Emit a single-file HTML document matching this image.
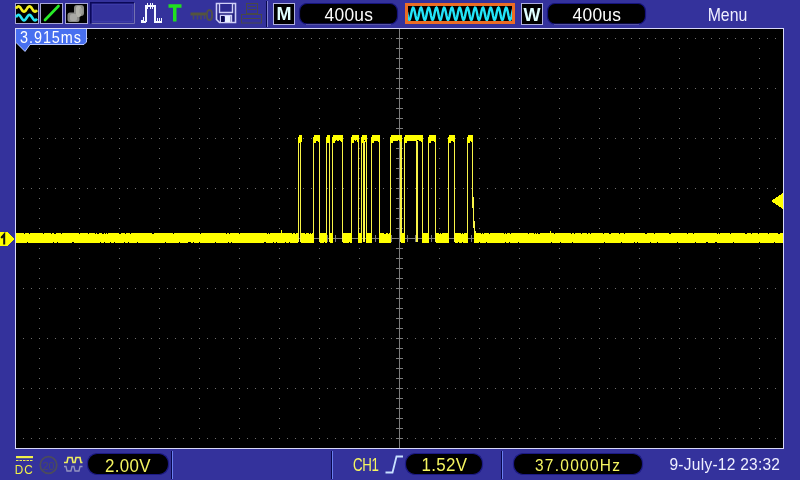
<!DOCTYPE html>
<html><head><meta charset="utf-8"><title>Oscilloscope</title>
<style>
html,body{margin:0;padding:0;width:800px;height:480px;overflow:hidden;background:#34329c;}
svg{position:absolute;left:0;top:0;display:block;will-change:transform;}
text{font-family:"Liberation Sans",sans-serif;}
</style></head><body>
<svg width="800" height="480" viewBox="0 0 800 480">
<rect x="0" y="0" width="800" height="480" fill="#34329c"/>
<g shape-rendering="crispEdges">
<rect x="15" y="28" width="769" height="421" fill="#d8d8f8" />
<rect x="16" y="29" width="767" height="419" fill="#000" />
<path d="M23 38h1v1h-1zM31 38h1v1h-1zM39 38h1v1h-1zM47 38h1v1h-1zM55 38h1v1h-1zM63 38h1v1h-1zM71 38h1v1h-1zM79 38h1v1h-1zM87 38h1v1h-1zM95 38h1v1h-1zM103 38h1v1h-1zM111 38h1v1h-1zM119 38h1v1h-1zM127 38h1v1h-1zM135 38h1v1h-1zM143 38h1v1h-1zM151 38h1v1h-1zM159 38h1v1h-1zM167 38h1v1h-1zM175 38h1v1h-1zM183 38h1v1h-1zM191 38h1v1h-1zM199 38h1v1h-1zM207 38h1v1h-1zM215 38h1v1h-1zM223 38h1v1h-1zM231 38h1v1h-1zM239 38h1v1h-1zM247 38h1v1h-1zM255 38h1v1h-1zM263 38h1v1h-1zM271 38h1v1h-1zM279 38h1v1h-1zM287 38h1v1h-1zM295 38h1v1h-1zM303 38h1v1h-1zM311 38h1v1h-1zM319 38h1v1h-1zM327 38h1v1h-1zM335 38h1v1h-1zM343 38h1v1h-1zM351 38h1v1h-1zM359 38h1v1h-1zM367 38h1v1h-1zM375 38h1v1h-1zM383 38h1v1h-1zM391 38h1v1h-1zM399 38h1v1h-1zM407 38h1v1h-1zM415 38h1v1h-1zM423 38h1v1h-1zM431 38h1v1h-1zM439 38h1v1h-1zM447 38h1v1h-1zM455 38h1v1h-1zM463 38h1v1h-1zM471 38h1v1h-1zM479 38h1v1h-1zM487 38h1v1h-1zM495 38h1v1h-1zM503 38h1v1h-1zM511 38h1v1h-1zM519 38h1v1h-1zM527 38h1v1h-1zM535 38h1v1h-1zM543 38h1v1h-1zM551 38h1v1h-1zM559 38h1v1h-1zM567 38h1v1h-1zM575 38h1v1h-1zM583 38h1v1h-1zM591 38h1v1h-1zM599 38h1v1h-1zM607 38h1v1h-1zM615 38h1v1h-1zM623 38h1v1h-1zM631 38h1v1h-1zM639 38h1v1h-1zM647 38h1v1h-1zM655 38h1v1h-1zM663 38h1v1h-1zM671 38h1v1h-1zM679 38h1v1h-1zM687 38h1v1h-1zM695 38h1v1h-1zM703 38h1v1h-1zM711 38h1v1h-1zM719 38h1v1h-1zM727 38h1v1h-1zM735 38h1v1h-1zM743 38h1v1h-1zM751 38h1v1h-1zM759 38h1v1h-1zM767 38h1v1h-1zM775 38h1v1h-1zM23 88h1v1h-1zM31 88h1v1h-1zM39 88h1v1h-1zM47 88h1v1h-1zM55 88h1v1h-1zM63 88h1v1h-1zM71 88h1v1h-1zM79 88h1v1h-1zM87 88h1v1h-1zM95 88h1v1h-1zM103 88h1v1h-1zM111 88h1v1h-1zM119 88h1v1h-1zM127 88h1v1h-1zM135 88h1v1h-1zM143 88h1v1h-1zM151 88h1v1h-1zM159 88h1v1h-1zM167 88h1v1h-1zM175 88h1v1h-1zM183 88h1v1h-1zM191 88h1v1h-1zM199 88h1v1h-1zM207 88h1v1h-1zM215 88h1v1h-1zM223 88h1v1h-1zM231 88h1v1h-1zM239 88h1v1h-1zM247 88h1v1h-1zM255 88h1v1h-1zM263 88h1v1h-1zM271 88h1v1h-1zM279 88h1v1h-1zM287 88h1v1h-1zM295 88h1v1h-1zM303 88h1v1h-1zM311 88h1v1h-1zM319 88h1v1h-1zM327 88h1v1h-1zM335 88h1v1h-1zM343 88h1v1h-1zM351 88h1v1h-1zM359 88h1v1h-1zM367 88h1v1h-1zM375 88h1v1h-1zM383 88h1v1h-1zM391 88h1v1h-1zM399 88h1v1h-1zM407 88h1v1h-1zM415 88h1v1h-1zM423 88h1v1h-1zM431 88h1v1h-1zM439 88h1v1h-1zM447 88h1v1h-1zM455 88h1v1h-1zM463 88h1v1h-1zM471 88h1v1h-1zM479 88h1v1h-1zM487 88h1v1h-1zM495 88h1v1h-1zM503 88h1v1h-1zM511 88h1v1h-1zM519 88h1v1h-1zM527 88h1v1h-1zM535 88h1v1h-1zM543 88h1v1h-1zM551 88h1v1h-1zM559 88h1v1h-1zM567 88h1v1h-1zM575 88h1v1h-1zM583 88h1v1h-1zM591 88h1v1h-1zM599 88h1v1h-1zM607 88h1v1h-1zM615 88h1v1h-1zM623 88h1v1h-1zM631 88h1v1h-1zM639 88h1v1h-1zM647 88h1v1h-1zM655 88h1v1h-1zM663 88h1v1h-1zM671 88h1v1h-1zM679 88h1v1h-1zM687 88h1v1h-1zM695 88h1v1h-1zM703 88h1v1h-1zM711 88h1v1h-1zM719 88h1v1h-1zM727 88h1v1h-1zM735 88h1v1h-1zM743 88h1v1h-1zM751 88h1v1h-1zM759 88h1v1h-1zM767 88h1v1h-1zM775 88h1v1h-1zM23 138h1v1h-1zM31 138h1v1h-1zM39 138h1v1h-1zM47 138h1v1h-1zM55 138h1v1h-1zM63 138h1v1h-1zM71 138h1v1h-1zM79 138h1v1h-1zM87 138h1v1h-1zM95 138h1v1h-1zM103 138h1v1h-1zM111 138h1v1h-1zM119 138h1v1h-1zM127 138h1v1h-1zM135 138h1v1h-1zM143 138h1v1h-1zM151 138h1v1h-1zM159 138h1v1h-1zM167 138h1v1h-1zM175 138h1v1h-1zM183 138h1v1h-1zM191 138h1v1h-1zM199 138h1v1h-1zM207 138h1v1h-1zM215 138h1v1h-1zM223 138h1v1h-1zM231 138h1v1h-1zM239 138h1v1h-1zM247 138h1v1h-1zM255 138h1v1h-1zM263 138h1v1h-1zM271 138h1v1h-1zM279 138h1v1h-1zM287 138h1v1h-1zM295 138h1v1h-1zM303 138h1v1h-1zM311 138h1v1h-1zM319 138h1v1h-1zM327 138h1v1h-1zM335 138h1v1h-1zM343 138h1v1h-1zM351 138h1v1h-1zM359 138h1v1h-1zM367 138h1v1h-1zM375 138h1v1h-1zM383 138h1v1h-1zM391 138h1v1h-1zM399 138h1v1h-1zM407 138h1v1h-1zM415 138h1v1h-1zM423 138h1v1h-1zM431 138h1v1h-1zM439 138h1v1h-1zM447 138h1v1h-1zM455 138h1v1h-1zM463 138h1v1h-1zM471 138h1v1h-1zM479 138h1v1h-1zM487 138h1v1h-1zM495 138h1v1h-1zM503 138h1v1h-1zM511 138h1v1h-1zM519 138h1v1h-1zM527 138h1v1h-1zM535 138h1v1h-1zM543 138h1v1h-1zM551 138h1v1h-1zM559 138h1v1h-1zM567 138h1v1h-1zM575 138h1v1h-1zM583 138h1v1h-1zM591 138h1v1h-1zM599 138h1v1h-1zM607 138h1v1h-1zM615 138h1v1h-1zM623 138h1v1h-1zM631 138h1v1h-1zM639 138h1v1h-1zM647 138h1v1h-1zM655 138h1v1h-1zM663 138h1v1h-1zM671 138h1v1h-1zM679 138h1v1h-1zM687 138h1v1h-1zM695 138h1v1h-1zM703 138h1v1h-1zM711 138h1v1h-1zM719 138h1v1h-1zM727 138h1v1h-1zM735 138h1v1h-1zM743 138h1v1h-1zM751 138h1v1h-1zM759 138h1v1h-1zM767 138h1v1h-1zM775 138h1v1h-1zM23 188h1v1h-1zM31 188h1v1h-1zM39 188h1v1h-1zM47 188h1v1h-1zM55 188h1v1h-1zM63 188h1v1h-1zM71 188h1v1h-1zM79 188h1v1h-1zM87 188h1v1h-1zM95 188h1v1h-1zM103 188h1v1h-1zM111 188h1v1h-1zM119 188h1v1h-1zM127 188h1v1h-1zM135 188h1v1h-1zM143 188h1v1h-1zM151 188h1v1h-1zM159 188h1v1h-1zM167 188h1v1h-1zM175 188h1v1h-1zM183 188h1v1h-1zM191 188h1v1h-1zM199 188h1v1h-1zM207 188h1v1h-1zM215 188h1v1h-1zM223 188h1v1h-1zM231 188h1v1h-1zM239 188h1v1h-1zM247 188h1v1h-1zM255 188h1v1h-1zM263 188h1v1h-1zM271 188h1v1h-1zM279 188h1v1h-1zM287 188h1v1h-1zM295 188h1v1h-1zM303 188h1v1h-1zM311 188h1v1h-1zM319 188h1v1h-1zM327 188h1v1h-1zM335 188h1v1h-1zM343 188h1v1h-1zM351 188h1v1h-1zM359 188h1v1h-1zM367 188h1v1h-1zM375 188h1v1h-1zM383 188h1v1h-1zM391 188h1v1h-1zM399 188h1v1h-1zM407 188h1v1h-1zM415 188h1v1h-1zM423 188h1v1h-1zM431 188h1v1h-1zM439 188h1v1h-1zM447 188h1v1h-1zM455 188h1v1h-1zM463 188h1v1h-1zM471 188h1v1h-1zM479 188h1v1h-1zM487 188h1v1h-1zM495 188h1v1h-1zM503 188h1v1h-1zM511 188h1v1h-1zM519 188h1v1h-1zM527 188h1v1h-1zM535 188h1v1h-1zM543 188h1v1h-1zM551 188h1v1h-1zM559 188h1v1h-1zM567 188h1v1h-1zM575 188h1v1h-1zM583 188h1v1h-1zM591 188h1v1h-1zM599 188h1v1h-1zM607 188h1v1h-1zM615 188h1v1h-1zM623 188h1v1h-1zM631 188h1v1h-1zM639 188h1v1h-1zM647 188h1v1h-1zM655 188h1v1h-1zM663 188h1v1h-1zM671 188h1v1h-1zM679 188h1v1h-1zM687 188h1v1h-1zM695 188h1v1h-1zM703 188h1v1h-1zM711 188h1v1h-1zM719 188h1v1h-1zM727 188h1v1h-1zM735 188h1v1h-1zM743 188h1v1h-1zM751 188h1v1h-1zM759 188h1v1h-1zM767 188h1v1h-1zM775 188h1v1h-1zM23 288h1v1h-1zM31 288h1v1h-1zM39 288h1v1h-1zM47 288h1v1h-1zM55 288h1v1h-1zM63 288h1v1h-1zM71 288h1v1h-1zM79 288h1v1h-1zM87 288h1v1h-1zM95 288h1v1h-1zM103 288h1v1h-1zM111 288h1v1h-1zM119 288h1v1h-1zM127 288h1v1h-1zM135 288h1v1h-1zM143 288h1v1h-1zM151 288h1v1h-1zM159 288h1v1h-1zM167 288h1v1h-1zM175 288h1v1h-1zM183 288h1v1h-1zM191 288h1v1h-1zM199 288h1v1h-1zM207 288h1v1h-1zM215 288h1v1h-1zM223 288h1v1h-1zM231 288h1v1h-1zM239 288h1v1h-1zM247 288h1v1h-1zM255 288h1v1h-1zM263 288h1v1h-1zM271 288h1v1h-1zM279 288h1v1h-1zM287 288h1v1h-1zM295 288h1v1h-1zM303 288h1v1h-1zM311 288h1v1h-1zM319 288h1v1h-1zM327 288h1v1h-1zM335 288h1v1h-1zM343 288h1v1h-1zM351 288h1v1h-1zM359 288h1v1h-1zM367 288h1v1h-1zM375 288h1v1h-1zM383 288h1v1h-1zM391 288h1v1h-1zM399 288h1v1h-1zM407 288h1v1h-1zM415 288h1v1h-1zM423 288h1v1h-1zM431 288h1v1h-1zM439 288h1v1h-1zM447 288h1v1h-1zM455 288h1v1h-1zM463 288h1v1h-1zM471 288h1v1h-1zM479 288h1v1h-1zM487 288h1v1h-1zM495 288h1v1h-1zM503 288h1v1h-1zM511 288h1v1h-1zM519 288h1v1h-1zM527 288h1v1h-1zM535 288h1v1h-1zM543 288h1v1h-1zM551 288h1v1h-1zM559 288h1v1h-1zM567 288h1v1h-1zM575 288h1v1h-1zM583 288h1v1h-1zM591 288h1v1h-1zM599 288h1v1h-1zM607 288h1v1h-1zM615 288h1v1h-1zM623 288h1v1h-1zM631 288h1v1h-1zM639 288h1v1h-1zM647 288h1v1h-1zM655 288h1v1h-1zM663 288h1v1h-1zM671 288h1v1h-1zM679 288h1v1h-1zM687 288h1v1h-1zM695 288h1v1h-1zM703 288h1v1h-1zM711 288h1v1h-1zM719 288h1v1h-1zM727 288h1v1h-1zM735 288h1v1h-1zM743 288h1v1h-1zM751 288h1v1h-1zM759 288h1v1h-1zM767 288h1v1h-1zM775 288h1v1h-1zM23 338h1v1h-1zM31 338h1v1h-1zM39 338h1v1h-1zM47 338h1v1h-1zM55 338h1v1h-1zM63 338h1v1h-1zM71 338h1v1h-1zM79 338h1v1h-1zM87 338h1v1h-1zM95 338h1v1h-1zM103 338h1v1h-1zM111 338h1v1h-1zM119 338h1v1h-1zM127 338h1v1h-1zM135 338h1v1h-1zM143 338h1v1h-1zM151 338h1v1h-1zM159 338h1v1h-1zM167 338h1v1h-1zM175 338h1v1h-1zM183 338h1v1h-1zM191 338h1v1h-1zM199 338h1v1h-1zM207 338h1v1h-1zM215 338h1v1h-1zM223 338h1v1h-1zM231 338h1v1h-1zM239 338h1v1h-1zM247 338h1v1h-1zM255 338h1v1h-1zM263 338h1v1h-1zM271 338h1v1h-1zM279 338h1v1h-1zM287 338h1v1h-1zM295 338h1v1h-1zM303 338h1v1h-1zM311 338h1v1h-1zM319 338h1v1h-1zM327 338h1v1h-1zM335 338h1v1h-1zM343 338h1v1h-1zM351 338h1v1h-1zM359 338h1v1h-1zM367 338h1v1h-1zM375 338h1v1h-1zM383 338h1v1h-1zM391 338h1v1h-1zM399 338h1v1h-1zM407 338h1v1h-1zM415 338h1v1h-1zM423 338h1v1h-1zM431 338h1v1h-1zM439 338h1v1h-1zM447 338h1v1h-1zM455 338h1v1h-1zM463 338h1v1h-1zM471 338h1v1h-1zM479 338h1v1h-1zM487 338h1v1h-1zM495 338h1v1h-1zM503 338h1v1h-1zM511 338h1v1h-1zM519 338h1v1h-1zM527 338h1v1h-1zM535 338h1v1h-1zM543 338h1v1h-1zM551 338h1v1h-1zM559 338h1v1h-1zM567 338h1v1h-1zM575 338h1v1h-1zM583 338h1v1h-1zM591 338h1v1h-1zM599 338h1v1h-1zM607 338h1v1h-1zM615 338h1v1h-1zM623 338h1v1h-1zM631 338h1v1h-1zM639 338h1v1h-1zM647 338h1v1h-1zM655 338h1v1h-1zM663 338h1v1h-1zM671 338h1v1h-1zM679 338h1v1h-1zM687 338h1v1h-1zM695 338h1v1h-1zM703 338h1v1h-1zM711 338h1v1h-1zM719 338h1v1h-1zM727 338h1v1h-1zM735 338h1v1h-1zM743 338h1v1h-1zM751 338h1v1h-1zM759 338h1v1h-1zM767 338h1v1h-1zM775 338h1v1h-1zM23 388h1v1h-1zM31 388h1v1h-1zM39 388h1v1h-1zM47 388h1v1h-1zM55 388h1v1h-1zM63 388h1v1h-1zM71 388h1v1h-1zM79 388h1v1h-1zM87 388h1v1h-1zM95 388h1v1h-1zM103 388h1v1h-1zM111 388h1v1h-1zM119 388h1v1h-1zM127 388h1v1h-1zM135 388h1v1h-1zM143 388h1v1h-1zM151 388h1v1h-1zM159 388h1v1h-1zM167 388h1v1h-1zM175 388h1v1h-1zM183 388h1v1h-1zM191 388h1v1h-1zM199 388h1v1h-1zM207 388h1v1h-1zM215 388h1v1h-1zM223 388h1v1h-1zM231 388h1v1h-1zM239 388h1v1h-1zM247 388h1v1h-1zM255 388h1v1h-1zM263 388h1v1h-1zM271 388h1v1h-1zM279 388h1v1h-1zM287 388h1v1h-1zM295 388h1v1h-1zM303 388h1v1h-1zM311 388h1v1h-1zM319 388h1v1h-1zM327 388h1v1h-1zM335 388h1v1h-1zM343 388h1v1h-1zM351 388h1v1h-1zM359 388h1v1h-1zM367 388h1v1h-1zM375 388h1v1h-1zM383 388h1v1h-1zM391 388h1v1h-1zM399 388h1v1h-1zM407 388h1v1h-1zM415 388h1v1h-1zM423 388h1v1h-1zM431 388h1v1h-1zM439 388h1v1h-1zM447 388h1v1h-1zM455 388h1v1h-1zM463 388h1v1h-1zM471 388h1v1h-1zM479 388h1v1h-1zM487 388h1v1h-1zM495 388h1v1h-1zM503 388h1v1h-1zM511 388h1v1h-1zM519 388h1v1h-1zM527 388h1v1h-1zM535 388h1v1h-1zM543 388h1v1h-1zM551 388h1v1h-1zM559 388h1v1h-1zM567 388h1v1h-1zM575 388h1v1h-1zM583 388h1v1h-1zM591 388h1v1h-1zM599 388h1v1h-1zM607 388h1v1h-1zM615 388h1v1h-1zM623 388h1v1h-1zM631 388h1v1h-1zM639 388h1v1h-1zM647 388h1v1h-1zM655 388h1v1h-1zM663 388h1v1h-1zM671 388h1v1h-1zM679 388h1v1h-1zM687 388h1v1h-1zM695 388h1v1h-1zM703 388h1v1h-1zM711 388h1v1h-1zM719 388h1v1h-1zM727 388h1v1h-1zM735 388h1v1h-1zM743 388h1v1h-1zM751 388h1v1h-1zM759 388h1v1h-1zM767 388h1v1h-1zM775 388h1v1h-1zM23 438h1v1h-1zM31 438h1v1h-1zM39 438h1v1h-1zM47 438h1v1h-1zM55 438h1v1h-1zM63 438h1v1h-1zM71 438h1v1h-1zM79 438h1v1h-1zM87 438h1v1h-1zM95 438h1v1h-1zM103 438h1v1h-1zM111 438h1v1h-1zM119 438h1v1h-1zM127 438h1v1h-1zM135 438h1v1h-1zM143 438h1v1h-1zM151 438h1v1h-1zM159 438h1v1h-1zM167 438h1v1h-1zM175 438h1v1h-1zM183 438h1v1h-1zM191 438h1v1h-1zM199 438h1v1h-1zM207 438h1v1h-1zM215 438h1v1h-1zM223 438h1v1h-1zM231 438h1v1h-1zM239 438h1v1h-1zM247 438h1v1h-1zM255 438h1v1h-1zM263 438h1v1h-1zM271 438h1v1h-1zM279 438h1v1h-1zM287 438h1v1h-1zM295 438h1v1h-1zM303 438h1v1h-1zM311 438h1v1h-1zM319 438h1v1h-1zM327 438h1v1h-1zM335 438h1v1h-1zM343 438h1v1h-1zM351 438h1v1h-1zM359 438h1v1h-1zM367 438h1v1h-1zM375 438h1v1h-1zM383 438h1v1h-1zM391 438h1v1h-1zM399 438h1v1h-1zM407 438h1v1h-1zM415 438h1v1h-1zM423 438h1v1h-1zM431 438h1v1h-1zM439 438h1v1h-1zM447 438h1v1h-1zM455 438h1v1h-1zM463 438h1v1h-1zM471 438h1v1h-1zM479 438h1v1h-1zM487 438h1v1h-1zM495 438h1v1h-1zM503 438h1v1h-1zM511 438h1v1h-1zM519 438h1v1h-1zM527 438h1v1h-1zM535 438h1v1h-1zM543 438h1v1h-1zM551 438h1v1h-1zM559 438h1v1h-1zM567 438h1v1h-1zM575 438h1v1h-1zM583 438h1v1h-1zM591 438h1v1h-1zM599 438h1v1h-1zM607 438h1v1h-1zM615 438h1v1h-1zM623 438h1v1h-1zM631 438h1v1h-1zM639 438h1v1h-1zM647 438h1v1h-1zM655 438h1v1h-1zM663 438h1v1h-1zM671 438h1v1h-1zM679 438h1v1h-1zM687 438h1v1h-1zM695 438h1v1h-1zM703 438h1v1h-1zM711 438h1v1h-1zM719 438h1v1h-1zM727 438h1v1h-1zM735 438h1v1h-1zM743 438h1v1h-1zM751 438h1v1h-1zM759 438h1v1h-1zM767 438h1v1h-1zM775 438h1v1h-1zM39 48h1v1h-1zM39 58h1v1h-1zM39 68h1v1h-1zM39 78h1v1h-1zM39 98h1v1h-1zM39 108h1v1h-1zM39 118h1v1h-1zM39 128h1v1h-1zM39 148h1v1h-1zM39 158h1v1h-1zM39 168h1v1h-1zM39 178h1v1h-1zM39 198h1v1h-1zM39 208h1v1h-1zM39 218h1v1h-1zM39 228h1v1h-1zM39 238h1v1h-1zM39 248h1v1h-1zM39 258h1v1h-1zM39 268h1v1h-1zM39 278h1v1h-1zM39 298h1v1h-1zM39 308h1v1h-1zM39 318h1v1h-1zM39 328h1v1h-1zM39 348h1v1h-1zM39 358h1v1h-1zM39 368h1v1h-1zM39 378h1v1h-1zM39 398h1v1h-1zM39 408h1v1h-1zM39 418h1v1h-1zM39 428h1v1h-1zM79 48h1v1h-1zM79 58h1v1h-1zM79 68h1v1h-1zM79 78h1v1h-1zM79 98h1v1h-1zM79 108h1v1h-1zM79 118h1v1h-1zM79 128h1v1h-1zM79 148h1v1h-1zM79 158h1v1h-1zM79 168h1v1h-1zM79 178h1v1h-1zM79 198h1v1h-1zM79 208h1v1h-1zM79 218h1v1h-1zM79 228h1v1h-1zM79 238h1v1h-1zM79 248h1v1h-1zM79 258h1v1h-1zM79 268h1v1h-1zM79 278h1v1h-1zM79 298h1v1h-1zM79 308h1v1h-1zM79 318h1v1h-1zM79 328h1v1h-1zM79 348h1v1h-1zM79 358h1v1h-1zM79 368h1v1h-1zM79 378h1v1h-1zM79 398h1v1h-1zM79 408h1v1h-1zM79 418h1v1h-1zM79 428h1v1h-1zM119 48h1v1h-1zM119 58h1v1h-1zM119 68h1v1h-1zM119 78h1v1h-1zM119 98h1v1h-1zM119 108h1v1h-1zM119 118h1v1h-1zM119 128h1v1h-1zM119 148h1v1h-1zM119 158h1v1h-1zM119 168h1v1h-1zM119 178h1v1h-1zM119 198h1v1h-1zM119 208h1v1h-1zM119 218h1v1h-1zM119 228h1v1h-1zM119 238h1v1h-1zM119 248h1v1h-1zM119 258h1v1h-1zM119 268h1v1h-1zM119 278h1v1h-1zM119 298h1v1h-1zM119 308h1v1h-1zM119 318h1v1h-1zM119 328h1v1h-1zM119 348h1v1h-1zM119 358h1v1h-1zM119 368h1v1h-1zM119 378h1v1h-1zM119 398h1v1h-1zM119 408h1v1h-1zM119 418h1v1h-1zM119 428h1v1h-1zM159 48h1v1h-1zM159 58h1v1h-1zM159 68h1v1h-1zM159 78h1v1h-1zM159 98h1v1h-1zM159 108h1v1h-1zM159 118h1v1h-1zM159 128h1v1h-1zM159 148h1v1h-1zM159 158h1v1h-1zM159 168h1v1h-1zM159 178h1v1h-1zM159 198h1v1h-1zM159 208h1v1h-1zM159 218h1v1h-1zM159 228h1v1h-1zM159 238h1v1h-1zM159 248h1v1h-1zM159 258h1v1h-1zM159 268h1v1h-1zM159 278h1v1h-1zM159 298h1v1h-1zM159 308h1v1h-1zM159 318h1v1h-1zM159 328h1v1h-1zM159 348h1v1h-1zM159 358h1v1h-1zM159 368h1v1h-1zM159 378h1v1h-1zM159 398h1v1h-1zM159 408h1v1h-1zM159 418h1v1h-1zM159 428h1v1h-1zM199 48h1v1h-1zM199 58h1v1h-1zM199 68h1v1h-1zM199 78h1v1h-1zM199 98h1v1h-1zM199 108h1v1h-1zM199 118h1v1h-1zM199 128h1v1h-1zM199 148h1v1h-1zM199 158h1v1h-1zM199 168h1v1h-1zM199 178h1v1h-1zM199 198h1v1h-1zM199 208h1v1h-1zM199 218h1v1h-1zM199 228h1v1h-1zM199 238h1v1h-1zM199 248h1v1h-1zM199 258h1v1h-1zM199 268h1v1h-1zM199 278h1v1h-1zM199 298h1v1h-1zM199 308h1v1h-1zM199 318h1v1h-1zM199 328h1v1h-1zM199 348h1v1h-1zM199 358h1v1h-1zM199 368h1v1h-1zM199 378h1v1h-1zM199 398h1v1h-1zM199 408h1v1h-1zM199 418h1v1h-1zM199 428h1v1h-1zM239 48h1v1h-1zM239 58h1v1h-1zM239 68h1v1h-1zM239 78h1v1h-1zM239 98h1v1h-1zM239 108h1v1h-1zM239 118h1v1h-1zM239 128h1v1h-1zM239 148h1v1h-1zM239 158h1v1h-1zM239 168h1v1h-1zM239 178h1v1h-1zM239 198h1v1h-1zM239 208h1v1h-1zM239 218h1v1h-1zM239 228h1v1h-1zM239 238h1v1h-1zM239 248h1v1h-1zM239 258h1v1h-1zM239 268h1v1h-1zM239 278h1v1h-1zM239 298h1v1h-1zM239 308h1v1h-1zM239 318h1v1h-1zM239 328h1v1h-1zM239 348h1v1h-1zM239 358h1v1h-1zM239 368h1v1h-1zM239 378h1v1h-1zM239 398h1v1h-1zM239 408h1v1h-1zM239 418h1v1h-1zM239 428h1v1h-1zM279 48h1v1h-1zM279 58h1v1h-1zM279 68h1v1h-1zM279 78h1v1h-1zM279 98h1v1h-1zM279 108h1v1h-1zM279 118h1v1h-1zM279 128h1v1h-1zM279 148h1v1h-1zM279 158h1v1h-1zM279 168h1v1h-1zM279 178h1v1h-1zM279 198h1v1h-1zM279 208h1v1h-1zM279 218h1v1h-1zM279 228h1v1h-1zM279 238h1v1h-1zM279 248h1v1h-1zM279 258h1v1h-1zM279 268h1v1h-1zM279 278h1v1h-1zM279 298h1v1h-1zM279 308h1v1h-1zM279 318h1v1h-1zM279 328h1v1h-1zM279 348h1v1h-1zM279 358h1v1h-1zM279 368h1v1h-1zM279 378h1v1h-1zM279 398h1v1h-1zM279 408h1v1h-1zM279 418h1v1h-1zM279 428h1v1h-1zM319 48h1v1h-1zM319 58h1v1h-1zM319 68h1v1h-1zM319 78h1v1h-1zM319 98h1v1h-1zM319 108h1v1h-1zM319 118h1v1h-1zM319 128h1v1h-1zM319 148h1v1h-1zM319 158h1v1h-1zM319 168h1v1h-1zM319 178h1v1h-1zM319 198h1v1h-1zM319 208h1v1h-1zM319 218h1v1h-1zM319 228h1v1h-1zM319 238h1v1h-1zM319 248h1v1h-1zM319 258h1v1h-1zM319 268h1v1h-1zM319 278h1v1h-1zM319 298h1v1h-1zM319 308h1v1h-1zM319 318h1v1h-1zM319 328h1v1h-1zM319 348h1v1h-1zM319 358h1v1h-1zM319 368h1v1h-1zM319 378h1v1h-1zM319 398h1v1h-1zM319 408h1v1h-1zM319 418h1v1h-1zM319 428h1v1h-1zM359 48h1v1h-1zM359 58h1v1h-1zM359 68h1v1h-1zM359 78h1v1h-1zM359 98h1v1h-1zM359 108h1v1h-1zM359 118h1v1h-1zM359 128h1v1h-1zM359 148h1v1h-1zM359 158h1v1h-1zM359 168h1v1h-1zM359 178h1v1h-1zM359 198h1v1h-1zM359 208h1v1h-1zM359 218h1v1h-1zM359 228h1v1h-1zM359 238h1v1h-1zM359 248h1v1h-1zM359 258h1v1h-1zM359 268h1v1h-1zM359 278h1v1h-1zM359 298h1v1h-1zM359 308h1v1h-1zM359 318h1v1h-1zM359 328h1v1h-1zM359 348h1v1h-1zM359 358h1v1h-1zM359 368h1v1h-1zM359 378h1v1h-1zM359 398h1v1h-1zM359 408h1v1h-1zM359 418h1v1h-1zM359 428h1v1h-1zM439 48h1v1h-1zM439 58h1v1h-1zM439 68h1v1h-1zM439 78h1v1h-1zM439 98h1v1h-1zM439 108h1v1h-1zM439 118h1v1h-1zM439 128h1v1h-1zM439 148h1v1h-1zM439 158h1v1h-1zM439 168h1v1h-1zM439 178h1v1h-1zM439 198h1v1h-1zM439 208h1v1h-1zM439 218h1v1h-1zM439 228h1v1h-1zM439 238h1v1h-1zM439 248h1v1h-1zM439 258h1v1h-1zM439 268h1v1h-1zM439 278h1v1h-1zM439 298h1v1h-1zM439 308h1v1h-1zM439 318h1v1h-1zM439 328h1v1h-1zM439 348h1v1h-1zM439 358h1v1h-1zM439 368h1v1h-1zM439 378h1v1h-1zM439 398h1v1h-1zM439 408h1v1h-1zM439 418h1v1h-1zM439 428h1v1h-1zM479 48h1v1h-1zM479 58h1v1h-1zM479 68h1v1h-1zM479 78h1v1h-1zM479 98h1v1h-1zM479 108h1v1h-1zM479 118h1v1h-1zM479 128h1v1h-1zM479 148h1v1h-1zM479 158h1v1h-1zM479 168h1v1h-1zM479 178h1v1h-1zM479 198h1v1h-1zM479 208h1v1h-1zM479 218h1v1h-1zM479 228h1v1h-1zM479 238h1v1h-1zM479 248h1v1h-1zM479 258h1v1h-1zM479 268h1v1h-1zM479 278h1v1h-1zM479 298h1v1h-1zM479 308h1v1h-1zM479 318h1v1h-1zM479 328h1v1h-1zM479 348h1v1h-1zM479 358h1v1h-1zM479 368h1v1h-1zM479 378h1v1h-1zM479 398h1v1h-1zM479 408h1v1h-1zM479 418h1v1h-1zM479 428h1v1h-1zM519 48h1v1h-1zM519 58h1v1h-1zM519 68h1v1h-1zM519 78h1v1h-1zM519 98h1v1h-1zM519 108h1v1h-1zM519 118h1v1h-1zM519 128h1v1h-1zM519 148h1v1h-1zM519 158h1v1h-1zM519 168h1v1h-1zM519 178h1v1h-1zM519 198h1v1h-1zM519 208h1v1h-1zM519 218h1v1h-1zM519 228h1v1h-1zM519 238h1v1h-1zM519 248h1v1h-1zM519 258h1v1h-1zM519 268h1v1h-1zM519 278h1v1h-1zM519 298h1v1h-1zM519 308h1v1h-1zM519 318h1v1h-1zM519 328h1v1h-1zM519 348h1v1h-1zM519 358h1v1h-1zM519 368h1v1h-1zM519 378h1v1h-1zM519 398h1v1h-1zM519 408h1v1h-1zM519 418h1v1h-1zM519 428h1v1h-1zM559 48h1v1h-1zM559 58h1v1h-1zM559 68h1v1h-1zM559 78h1v1h-1zM559 98h1v1h-1zM559 108h1v1h-1zM559 118h1v1h-1zM559 128h1v1h-1zM559 148h1v1h-1zM559 158h1v1h-1zM559 168h1v1h-1zM559 178h1v1h-1zM559 198h1v1h-1zM559 208h1v1h-1zM559 218h1v1h-1zM559 228h1v1h-1zM559 238h1v1h-1zM559 248h1v1h-1zM559 258h1v1h-1zM559 268h1v1h-1zM559 278h1v1h-1zM559 298h1v1h-1zM559 308h1v1h-1zM559 318h1v1h-1zM559 328h1v1h-1zM559 348h1v1h-1zM559 358h1v1h-1zM559 368h1v1h-1zM559 378h1v1h-1zM559 398h1v1h-1zM559 408h1v1h-1zM559 418h1v1h-1zM559 428h1v1h-1zM599 48h1v1h-1zM599 58h1v1h-1zM599 68h1v1h-1zM599 78h1v1h-1zM599 98h1v1h-1zM599 108h1v1h-1zM599 118h1v1h-1zM599 128h1v1h-1zM599 148h1v1h-1zM599 158h1v1h-1zM599 168h1v1h-1zM599 178h1v1h-1zM599 198h1v1h-1zM599 208h1v1h-1zM599 218h1v1h-1zM599 228h1v1h-1zM599 238h1v1h-1zM599 248h1v1h-1zM599 258h1v1h-1zM599 268h1v1h-1zM599 278h1v1h-1zM599 298h1v1h-1zM599 308h1v1h-1zM599 318h1v1h-1zM599 328h1v1h-1zM599 348h1v1h-1zM599 358h1v1h-1zM599 368h1v1h-1zM599 378h1v1h-1zM599 398h1v1h-1zM599 408h1v1h-1zM599 418h1v1h-1zM599 428h1v1h-1zM639 48h1v1h-1zM639 58h1v1h-1zM639 68h1v1h-1zM639 78h1v1h-1zM639 98h1v1h-1zM639 108h1v1h-1zM639 118h1v1h-1zM639 128h1v1h-1zM639 148h1v1h-1zM639 158h1v1h-1zM639 168h1v1h-1zM639 178h1v1h-1zM639 198h1v1h-1zM639 208h1v1h-1zM639 218h1v1h-1zM639 228h1v1h-1zM639 238h1v1h-1zM639 248h1v1h-1zM639 258h1v1h-1zM639 268h1v1h-1zM639 278h1v1h-1zM639 298h1v1h-1zM639 308h1v1h-1zM639 318h1v1h-1zM639 328h1v1h-1zM639 348h1v1h-1zM639 358h1v1h-1zM639 368h1v1h-1zM639 378h1v1h-1zM639 398h1v1h-1zM639 408h1v1h-1zM639 418h1v1h-1zM639 428h1v1h-1zM679 48h1v1h-1zM679 58h1v1h-1zM679 68h1v1h-1zM679 78h1v1h-1zM679 98h1v1h-1zM679 108h1v1h-1zM679 118h1v1h-1zM679 128h1v1h-1zM679 148h1v1h-1zM679 158h1v1h-1zM679 168h1v1h-1zM679 178h1v1h-1zM679 198h1v1h-1zM679 208h1v1h-1zM679 218h1v1h-1zM679 228h1v1h-1zM679 238h1v1h-1zM679 248h1v1h-1zM679 258h1v1h-1zM679 268h1v1h-1zM679 278h1v1h-1zM679 298h1v1h-1zM679 308h1v1h-1zM679 318h1v1h-1zM679 328h1v1h-1zM679 348h1v1h-1zM679 358h1v1h-1zM679 368h1v1h-1zM679 378h1v1h-1zM679 398h1v1h-1zM679 408h1v1h-1zM679 418h1v1h-1zM679 428h1v1h-1zM719 48h1v1h-1zM719 58h1v1h-1zM719 68h1v1h-1zM719 78h1v1h-1zM719 98h1v1h-1zM719 108h1v1h-1zM719 118h1v1h-1zM719 128h1v1h-1zM719 148h1v1h-1zM719 158h1v1h-1zM719 168h1v1h-1zM719 178h1v1h-1zM719 198h1v1h-1zM719 208h1v1h-1zM719 218h1v1h-1zM719 228h1v1h-1zM719 238h1v1h-1zM719 248h1v1h-1zM719 258h1v1h-1zM719 268h1v1h-1zM719 278h1v1h-1zM719 298h1v1h-1zM719 308h1v1h-1zM719 318h1v1h-1zM719 328h1v1h-1zM719 348h1v1h-1zM719 358h1v1h-1zM719 368h1v1h-1zM719 378h1v1h-1zM719 398h1v1h-1zM719 408h1v1h-1zM719 418h1v1h-1zM719 428h1v1h-1zM759 48h1v1h-1zM759 58h1v1h-1zM759 68h1v1h-1zM759 78h1v1h-1zM759 98h1v1h-1zM759 108h1v1h-1zM759 118h1v1h-1zM759 128h1v1h-1zM759 148h1v1h-1zM759 158h1v1h-1zM759 168h1v1h-1zM759 178h1v1h-1zM759 198h1v1h-1zM759 208h1v1h-1zM759 218h1v1h-1zM759 228h1v1h-1zM759 238h1v1h-1zM759 248h1v1h-1zM759 258h1v1h-1zM759 268h1v1h-1zM759 278h1v1h-1zM759 298h1v1h-1zM759 308h1v1h-1zM759 318h1v1h-1zM759 328h1v1h-1zM759 348h1v1h-1zM759 358h1v1h-1zM759 368h1v1h-1zM759 378h1v1h-1zM759 398h1v1h-1zM759 408h1v1h-1zM759 418h1v1h-1zM759 428h1v1h-1z" fill="#6c6c6c"/>
<rect x="399" y="29" width="1" height="419" fill="#7c7c7c" />
<path d="M396 38h7v1h-7zM396 48h7v1h-7zM396 58h7v1h-7zM396 68h7v1h-7zM396 78h7v1h-7zM396 88h7v1h-7zM396 98h7v1h-7zM396 108h7v1h-7zM396 118h7v1h-7zM396 128h7v1h-7zM396 138h7v1h-7zM396 148h7v1h-7zM396 158h7v1h-7zM396 168h7v1h-7zM396 178h7v1h-7zM396 188h7v1h-7zM396 198h7v1h-7zM396 208h7v1h-7zM396 218h7v1h-7zM396 228h7v1h-7zM396 238h7v1h-7zM396 248h7v1h-7zM396 258h7v1h-7zM396 268h7v1h-7zM396 278h7v1h-7zM396 288h7v1h-7zM396 298h7v1h-7zM396 308h7v1h-7zM396 318h7v1h-7zM396 328h7v1h-7zM396 338h7v1h-7zM396 348h7v1h-7zM396 358h7v1h-7zM396 368h7v1h-7zM396 378h7v1h-7zM396 388h7v1h-7zM396 398h7v1h-7zM396 408h7v1h-7zM396 418h7v1h-7zM396 428h7v1h-7zM396 438h7v1h-7zM23 235v7h1v-7zM31 235v7h1v-7zM39 235v7h1v-7zM47 235v7h1v-7zM55 235v7h1v-7zM63 235v7h1v-7zM71 235v7h1v-7zM79 235v7h1v-7zM87 235v7h1v-7zM95 235v7h1v-7zM103 235v7h1v-7zM111 235v7h1v-7zM119 235v7h1v-7zM127 235v7h1v-7zM135 235v7h1v-7zM143 235v7h1v-7zM151 235v7h1v-7zM159 235v7h1v-7zM167 235v7h1v-7zM175 235v7h1v-7zM183 235v7h1v-7zM191 235v7h1v-7zM199 235v7h1v-7zM207 235v7h1v-7zM215 235v7h1v-7zM223 235v7h1v-7zM231 235v7h1v-7zM239 235v7h1v-7zM247 235v7h1v-7zM255 235v7h1v-7zM263 235v7h1v-7zM271 235v7h1v-7zM279 235v7h1v-7zM287 235v7h1v-7zM295 235v7h1v-7zM303 235v7h1v-7zM311 235v7h1v-7zM319 235v7h1v-7zM327 235v7h1v-7zM335 235v7h1v-7zM343 235v7h1v-7zM351 235v7h1v-7zM359 235v7h1v-7zM367 235v7h1v-7zM375 235v7h1v-7zM383 235v7h1v-7zM391 235v7h1v-7zM399 235v7h1v-7zM407 235v7h1v-7zM415 235v7h1v-7zM423 235v7h1v-7zM431 235v7h1v-7zM439 235v7h1v-7zM447 235v7h1v-7zM455 235v7h1v-7zM463 235v7h1v-7zM471 235v7h1v-7zM479 235v7h1v-7zM487 235v7h1v-7zM495 235v7h1v-7zM503 235v7h1v-7zM511 235v7h1v-7zM519 235v7h1v-7zM527 235v7h1v-7zM535 235v7h1v-7zM543 235v7h1v-7zM551 235v7h1v-7zM559 235v7h1v-7zM567 235v7h1v-7zM575 235v7h1v-7zM583 235v7h1v-7zM591 235v7h1v-7zM599 235v7h1v-7zM607 235v7h1v-7zM615 235v7h1v-7zM623 235v7h1v-7zM631 235v7h1v-7zM639 235v7h1v-7zM647 235v7h1v-7zM655 235v7h1v-7zM663 235v7h1v-7zM671 235v7h1v-7zM679 235v7h1v-7zM687 235v7h1v-7zM695 235v7h1v-7zM703 235v7h1v-7zM711 235v7h1v-7zM719 235v7h1v-7zM727 235v7h1v-7zM735 235v7h1v-7zM743 235v7h1v-7zM751 235v7h1v-7zM759 235v7h1v-7zM767 235v7h1v-7zM775 235v7h1v-7z" fill="#7c7c7c"/>
<rect x="16" y="238" width="767" height="1" fill="#7c7c7c" />
<path d="M298.5 136V242" stroke="#f8f448" stroke-width="1.3" fill="none"/><path d="M300.6 136V242" stroke="#f8f448" stroke-width="1.3" fill="none"/><path d="M313.6 136V242" stroke="#f8f448" stroke-width="1.3" fill="none"/><path d="M319.4 136V242" stroke="#f8f448" stroke-width="1.3" fill="none"/><path d="M326.6 136V242" stroke="#f8f448" stroke-width="1.3" fill="none"/><path d="M329.4 136V242" stroke="#f8f448" stroke-width="1.3" fill="none"/><path d="M332.8 136V242" stroke="#f8f448" stroke-width="1.3" fill="none"/><path d="M342.4 136V242" stroke="#f8f448" stroke-width="1.3" fill="none"/><path d="M351.7 136V242" stroke="#f8f448" stroke-width="1.3" fill="none"/><path d="M358.4 136V242" stroke="#f8f448" stroke-width="1.3" fill="none"/><path d="M361.6 136V242" stroke="#f8f448" stroke-width="1.3" fill="none"/><path d="M364 136V242" stroke="#f8f448" stroke-width="1.3" fill="none"/><path d="M366.4 136V242" stroke="#f8f448" stroke-width="1.3" fill="none"/><path d="M371.6 136V242" stroke="#f8f448" stroke-width="1.3" fill="none"/><path d="M379.2 136V242" stroke="#f8f448" stroke-width="1.3" fill="none"/><path d="M390.8 136V242" stroke="#f8f448" stroke-width="1.3" fill="none"/><path d="M401.1 136V242" stroke="#f8f448" stroke-width="1.3" fill="none"/><path d="M404.6 136V242" stroke="#f8f448" stroke-width="1.3" fill="none"/><path d="M417 136V242" stroke="#f8f448" stroke-width="2" fill="none"/><path d="M422.6 136V242" stroke="#f8f448" stroke-width="1.3" fill="none"/><path d="M428.6 136V242" stroke="#f8f448" stroke-width="1.3" fill="none"/><path d="M435.2 136V242" stroke="#f8f448" stroke-width="1.3" fill="none"/><path d="M448.7 136V242" stroke="#f8f448" stroke-width="1.3" fill="none"/><path d="M454.4 136V242" stroke="#f8f448" stroke-width="1.3" fill="none"/><path d="M467.8 136V242" stroke="#f8f448" stroke-width="1.3" fill="none"/>
<path d="M472.5 141V190L474 226L475.5 236" stroke="#f8f448" stroke-width="1.5" fill="none"/>
<path d="M16 233H298V243H16zM301 233H313.5V243H301zM319.5 233H326.5V243H319.5zM329.5 233H332.5V243H329.5zM342.5 233H351.5V243H342.5zM358 233H362V243H358zM366 233H372V243H366zM379 233H391V243H379zM401 233H405V243H401zM422 233H429V243H422zM435.5 233H448.5V243H435.5zM454.5 233H468V243H454.5zM473.5 233H783V243H473.5zM298 135H301.5V141H298zM313 135H320V141H313zM326 135H330V141H326zM332 135H343V141H332zM351 135H359V141H351zM361 135H367V141H361zM371 135H380V141H371zM390 135H402V141H390zM404 135H423V141H404zM428 135H436V141H428zM448 135H455V141H448zM467 135H473V141H467zM298 141H300.5V143H298zM299.5 141H301.5V142H299.5zM313 141H315.5V143H313zM318 141H320V142H318zM326 141H328.5V143H326zM328 141H330V142H328zM332 141H334.5V143H332zM341 141H343V142H341zM351 141H353.5V143H351zM357 141H359V142H357zM361 141H363.5V143H361zM365 141H367V142H365zM371 141H373.5V143H371zM378 141H380V142H378zM390 141H392.5V143H390zM400 141H402V142H400zM404 141H406.5V143H404zM421 141H423V142H421zM428 141H430.5V143H428zM434 141H436V142H434zM448 141H450.5V143H448zM453 141H455V142H453zM467 141H469.5V143H467zM471 141H473V142H471z" fill="#ffff00"/>
<path d="M336 140h1v1h-1zM339 140h1v1h-1zM354 140h1v1h-1zM356 140h1v1h-1zM364 140h1v1h-1zM398 140h1v1h-1zM417 140h1v1h-1zM418 140h1v1h-1zM298 135h1.2v2h-1.2zM313 135h1.2v2h-1.2zM326 135h1.2v2h-1.2zM332 135h1.2v2h-1.2zM351 135h1.2v2h-1.2zM361 135h1.2v2h-1.2zM371 135h1.2v2h-1.2zM390 135h1.2v2h-1.2zM404 135h1.2v2h-1.2zM428 135h1.2v2h-1.2zM448 135h1.2v2h-1.2zM467 135h1.2v2h-1.2z" fill="#000"/>
<path d="M24 233h1v1h-1zM27 242h1v1h-1zM29 233h1v1h-1zM43 233h1v1h-1zM51 233h1v1h-1zM53 242h1v1h-1zM54 233h1v1h-1zM55 233h1v1h-1zM57 242h1v1h-1zM61 233h1v1h-1zM72 242h1v1h-1zM73 242h1v1h-1zM79 233h1v1h-1zM88 233h1v1h-1zM95 233h1v1h-1zM97 233h1v1h-1zM98 233h1v1h-1zM100 242h1v1h-1zM102 233h1v1h-1zM103 233h1v1h-1zM104 242h1v1h-1zM105 233h1v1h-1zM107 233h1v1h-1zM110 242h1v1h-1zM114 242h1v1h-1zM119 233h1v1h-1zM120 233h1v1h-1zM124 242h1v1h-1zM125 233h1v1h-1zM128 242h1v1h-1zM130 233h1v1h-1zM137 242h1v1h-1zM152 233h1v1h-1zM153 233h1v1h-1zM165 242h1v1h-1zM173 233h1v1h-1zM179 242h1v1h-1zM188 242h1v1h-1zM189 242h1v1h-1zM190 242h1v1h-1zM193 242h1v1h-1zM199 242h1v1h-1zM200 233h1v1h-1zM215 242h1v1h-1zM226 233h1v1h-1zM228 242h1v1h-1zM229 233h1v1h-1zM231 242h1v1h-1zM239 233h1v1h-1zM264 242h1v1h-1zM265 242h1v1h-1zM267 233h1v1h-1zM269 233h1v1h-1zM273 242h1v1h-1zM276 242h1v1h-1zM285 242h1v1h-1zM289 242h1v1h-1zM292 233h1v1h-1zM295 233h1v1h-1zM305 233h1v1h-1zM309 233h1v1h-1zM311 233h1v1h-1zM324 242h1v1h-1zM349 242h1v1h-1zM384 233h1v1h-1zM385 233h1v1h-1zM388 233h1v1h-1zM439 233h1v1h-1zM441 233h1v1h-1zM458 242h1v1h-1zM461 233h1v1h-1zM462 242h1v1h-1zM463 233h1v1h-1zM479 242h1v1h-1zM481 233h1v1h-1zM483 233h1v1h-1zM486 242h1v1h-1zM489 233h1v1h-1zM504 233h1v1h-1zM505 242h1v1h-1zM506 233h1v1h-1zM509 242h1v1h-1zM510 233h1v1h-1zM518 242h1v1h-1zM528 233h1v1h-1zM534 233h1v1h-1zM536 233h1v1h-1zM538 233h1v1h-1zM539 233h1v1h-1zM551 242h1v1h-1zM554 233h1v1h-1zM560 242h1v1h-1zM571 233h1v1h-1zM572 242h1v1h-1zM574 233h1v1h-1zM581 233h1v1h-1zM587 233h1v1h-1zM590 233h1v1h-1zM603 233h1v1h-1zM604 242h1v1h-1zM609 233h1v1h-1zM610 233h1v1h-1zM619 233h1v1h-1zM621 242h1v1h-1zM624 233h1v1h-1zM634 242h1v1h-1zM637 242h1v1h-1zM645 233h1v1h-1zM646 233h1v1h-1zM650 242h1v1h-1zM654 233h1v1h-1zM657 242h1v1h-1zM669 233h1v1h-1zM670 233h1v1h-1zM677 242h1v1h-1zM687 233h1v1h-1zM693 233h1v1h-1zM695 242h1v1h-1zM706 242h1v1h-1zM707 242h1v1h-1zM715 242h1v1h-1zM716 242h1v1h-1zM717 233h1v1h-1zM719 233h1v1h-1zM730 233h1v1h-1zM733 242h1v1h-1zM745 233h1v1h-1zM746 233h1v1h-1zM751 233h1v1h-1zM758 233h1v1h-1zM759 242h1v1h-1zM768 233h1v1h-1zM774 242h1v1h-1zM778 233h1v1h-1zM779 233h1v1h-1z" fill="#000"/>
<path d="M281 230h1v3h-1zM550 231h1v2h-1z" fill="#ffff00"/>
<path d="M771 201L783 193V209z" fill="#ffff00"/>
<path d="M0 232H7.5L15 239L7.5 246H0z" fill="#ffff00"/>
<path d="M1.2 238L4.2 234.5V244.5" stroke="#101010" stroke-width="2" fill="none" shape-rendering="geometricPrecision"/>
<path d="M16 29H86.5V42L84 44.5H30L25 51.5L16 42.5z" fill="#4870f0"/>
<path d="M16 42.5L25 51.5L30 44.5H84L86.5 42V29" stroke="#b8c8ff" stroke-width="1" fill="none" shape-rendering="geometricPrecision"/>
<g transform="translate(20.00,43) scale(0.9,1)"><text x="0" y="0" font-family="Liberation Sans" font-size="16" fill="#fff" textLength="67.78" lengthAdjust="spacing">3.915ms</text></g>
</g>
<rect x="15.5" y="3.5" width="23" height="20" fill="#000" stroke="#a8a8d8" stroke-width="1"/>

<polyline points="16.00,8.62 16.50,7.88 17.00,7.23 17.50,6.73 18.00,6.41 18.50,6.30 19.00,6.41 19.50,6.73 20.00,7.23 20.50,7.88 21.00,8.62 21.50,9.38 22.00,10.12 22.50,10.77 23.00,11.27 23.50,11.59 24.00,11.70 24.50,11.59 25.00,11.27 25.50,10.77 26.00,10.12 26.50,9.38 27.00,8.62 27.50,7.88 28.00,7.23 28.50,6.73 29.00,6.41 29.50,6.30 30.00,6.41 30.50,6.73 31.00,7.23 31.50,7.88 32.00,8.62 32.50,9.38 33.00,10.12 33.50,10.77 34.00,11.27 34.50,11.59 35.00,11.70 35.50,11.59 36.00,11.27 36.50,10.77 37.00,10.12" stroke="#f4f020" stroke-width="2.6" fill="none"/>
<polyline points="16.00,17.22 16.50,16.48 17.00,15.83 17.50,15.33 18.00,15.01 18.50,14.90 19.00,15.01 19.50,15.33 20.00,15.83 20.50,16.48 21.00,17.22 21.50,17.98 22.00,18.72 22.50,19.37 23.00,19.87 23.50,20.19 24.00,20.30 24.50,20.19 25.00,19.87 25.50,19.37 26.00,18.72 26.50,17.98 27.00,17.22 27.50,16.48 28.00,15.83 28.50,15.33 29.00,15.01 29.50,14.90 30.00,15.01 30.50,15.33 31.00,15.83 31.50,16.48 32.00,17.22 32.50,17.98 33.00,18.72 33.50,19.37 34.00,19.87 34.50,20.19 35.00,20.30 35.50,20.19 36.00,19.87 36.50,19.37 37.00,18.72" stroke="#28e4f4" stroke-width="2.6" fill="none"/>
<rect x="40.5" y="3.5" width="22" height="20" fill="#000" stroke="#a8a8d8" stroke-width="1"/>
<path d="M45 20L58.5 6" stroke="#28ec28" stroke-width="2.7" stroke-linecap="round"/>
<rect x="65.5" y="3.5" width="22" height="20" fill="#000" stroke="#a8a8d8" stroke-width="1"/>
<g shape-rendering="geometricPrecision"><rect x="74" y="5" width="10" height="11" rx="3" fill="#8c8c88"/><rect x="67.5" y="12.5" width="12" height="9.5" rx="2.5" fill="#8c8c88"/><rect x="76" y="6" width="5" height="11" rx="2" fill="#b4b4ac"/><rect x="70" y="14" width="7" height="7" rx="2" fill="#a8a8a4"/><rect x="79.5" y="8" width="3" height="6" rx="1.5" fill="#a0a09c"/></g>
<path d="M91.5 23.5H134.5V3" fill="none" stroke="#7472b0" stroke-width="1"/>
<path d="M90.8 23.5V2.8H134" fill="none" stroke="#0a0858" stroke-width="1.5"/>
<rect x="92.5" y="4.5" width="40" height="17" fill="none" stroke="#3c3aa8" stroke-width="1"/>
<g fill="#f4f8ff" shape-rendering="crispEdges"><rect x="145" y="5" width="2" height="17"/><rect x="154" y="5" width="2" height="17"/><rect x="145" y="5" width="11" height="2"/><rect x="147" y="3" width="1" height="6"/><rect x="150" y="3" width="1" height="6"/><rect x="152" y="3" width="1" height="6"/><rect x="141" y="21" width="5" height="2"/><rect x="143" y="17" width="1" height="5"/><rect x="141" y="20" width="2" height="2"/><rect x="154" y="21" width="8" height="2"/><rect x="157" y="18" width="1" height="4"/><rect x="159" y="18" width="1" height="4"/><rect x="161" y="18" width="1" height="4"/></g>
<path d="M168.5 4.2H181.5V7.8H176.5V21.6H173V7.8H168.5z" fill="#20e020"/>
<g fill="none"><path d="M190.5 14H207.5" stroke="#55553e" stroke-width="3"/><path d="M193.5 15V19.5M197.5 15V19.5M201 15V19.5M204.5 15V19" stroke="#4c4c5a" stroke-width="1.6"/><ellipse cx="209.5" cy="15" rx="2.6" ry="5" stroke="#50504a" stroke-width="2"/></g>
<path d="M216.5 3.5H235.5V22.5H219.5L216.5 19.5z" fill="#221f80" stroke="#d0d0f8" stroke-width="1.6"/>
<rect x="220" y="4" width="12.5" height="8" fill="#2c2a90"/>
<path d="M219.5 3.5V12.5H232.5V3.5" fill="none" stroke="#d0d0f8" stroke-width="1.4"/>
<path d="M220.5 22.5V15.5H231.5V22.5" fill="none" stroke="#d0d0f8" stroke-width="1.4"/>
<rect x="221" y="16" width="3" height="6" fill="#0c0a50"/><rect x="225" y="16" width="5.5" height="6" fill="#e8f0ff"/>
<g fill="none" stroke="#48484a" stroke-width="1"><rect x="246.5" y="3.5" width="11" height="10"/><path d="M248 6.5H256M248 9.5H256"/><rect x="241.5" y="14.5" width="20" height="8.5"/><path d="M243 18.5H260"/></g>
<rect x="266" y="1" width="1" height="26" fill="#08084c" />
<rect x="267" y="1" width="1" height="26" fill="#8080d0" />
<rect x="273.5" y="3.5" width="21" height="21" fill="#000" stroke="#b0b0e0" stroke-width="1"/>
<text x="284" y="20.3" font-family="Liberation Sans" font-weight="bold" font-size="18" fill="#e0ffff" text-anchor="middle">M</text>
<rect x="299.5" y="3.5" width="98" height="20.5" rx="7.5" fill="#000" stroke="#16147c" stroke-width="1.2"/><path d="M306 24.5H391" stroke="#5654a8" stroke-width="1"/>
<g transform="translate(324.50,21) scale(0.94,1)"><text x="0" y="0" font-family="Liberation Sans" font-size="18.5" fill="#fff" textLength="51.60" lengthAdjust="spacing">400us</text></g>
<rect x="405" y="3" width="110" height="21" fill="#ec6c24"/>
<rect x="408" y="6" width="104" height="15" fill="#000"/>
<clipPath id="ob"><rect x="408" y="6" width="104" height="15"/></clipPath>
<polyline clip-path="url(#ob)" points="407.00,11.89 407.50,14.38 408.00,16.76 408.50,18.65 409.00,19.75 409.50,19.88 410.00,19.01 410.50,17.29 411.00,15.00 411.50,12.50 412.00,10.21 412.50,8.49 413.00,7.62 413.50,7.75 414.00,8.85 414.50,10.74 415.00,13.12 415.50,15.61 416.00,17.79 416.50,19.32 417.00,19.94 417.50,19.56 418.00,18.24 418.50,16.20 419.00,13.75 419.50,11.30 420.00,9.26 420.50,7.94 421.00,7.56 421.50,8.18 422.00,9.71 422.50,11.89 423.00,14.38 423.50,16.76 424.00,18.65 424.50,19.75 425.00,19.88 425.50,19.01 426.00,17.29 426.50,15.00 427.00,12.50 427.50,10.21 428.00,8.49 428.50,7.62 429.00,7.75 429.50,8.85 430.00,10.74 430.50,13.12 431.00,15.61 431.50,17.79 432.00,19.32 432.50,19.94 433.00,19.56 433.50,18.24 434.00,16.20 434.50,13.75 435.00,11.30 435.50,9.26 436.00,7.94 436.50,7.56 437.00,8.18 437.50,9.71 438.00,11.89 438.50,14.38 439.00,16.76 439.50,18.65 440.00,19.75 440.50,19.88 441.00,19.01 441.50,17.29 442.00,15.00 442.50,12.50 443.00,10.21 443.50,8.49 444.00,7.62 444.50,7.75 445.00,8.85 445.50,10.74 446.00,13.12 446.50,15.61 447.00,17.79 447.50,19.32 448.00,19.94 448.50,19.56 449.00,18.24 449.50,16.20 450.00,13.75 450.50,11.30 451.00,9.26 451.50,7.94 452.00,7.56 452.50,8.18 453.00,9.71 453.50,11.89 454.00,14.38 454.50,16.76 455.00,18.65 455.50,19.75 456.00,19.88 456.50,19.01 457.00,17.29 457.50,15.00 458.00,12.50 458.50,10.21 459.00,8.49 459.50,7.62 460.00,7.75 460.50,8.85 461.00,10.74 461.50,13.12 462.00,15.61 462.50,17.79 463.00,19.32 463.50,19.94 464.00,19.56 464.50,18.24 465.00,16.20 465.50,13.75 466.00,11.30 466.50,9.26 467.00,7.94 467.50,7.56 468.00,8.18 468.50,9.71 469.00,11.89 469.50,14.38 470.00,16.76 470.50,18.65 471.00,19.75 471.50,19.88 472.00,19.01 472.50,17.29 473.00,15.00 473.50,12.50 474.00,10.21 474.50,8.49 475.00,7.62 475.50,7.75 476.00,8.85 476.50,10.74 477.00,13.12 477.50,15.61 478.00,17.79 478.50,19.32 479.00,19.94 479.50,19.56 480.00,18.24 480.50,16.20 481.00,13.75 481.50,11.30 482.00,9.26 482.50,7.94 483.00,7.56 483.50,8.18 484.00,9.71 484.50,11.89 485.00,14.38 485.50,16.76 486.00,18.65 486.50,19.75 487.00,19.88 487.50,19.01 488.00,17.29 488.50,15.00 489.00,12.50 489.50,10.21 490.00,8.49 490.50,7.62 491.00,7.75 491.50,8.85 492.00,10.74 492.50,13.12 493.00,15.61 493.50,17.79 494.00,19.32 494.50,19.94 495.00,19.56 495.50,18.24 496.00,16.20 496.50,13.75 497.00,11.30 497.50,9.26 498.00,7.94 498.50,7.56 499.00,8.18 499.50,9.71 500.00,11.89 500.50,14.38 501.00,16.76 501.50,18.65 502.00,19.75 502.50,19.88 503.00,19.01 503.50,17.29 504.00,15.00 504.50,12.50 505.00,10.21 505.50,8.49 506.00,7.62 506.50,7.75 507.00,8.85 507.50,10.74 508.00,13.12 508.50,15.61 509.00,17.79 509.50,19.32 510.00,19.94 510.50,19.56 511.00,18.24 511.50,16.20 512.00,13.75 512.50,11.30 513.00,9.26 513.50,7.94 514.00,7.56 514.50,8.18 515.00,9.71 515.50,11.89 516.00,14.38 516.50,16.76 517.00,18.65" stroke="#22e4f8" stroke-width="2.4" fill="none"/>
<rect x="521.5" y="3.5" width="21" height="21" fill="#000" stroke="#b0b0e0" stroke-width="1"/>
<text x="532" y="20.6" font-family="Liberation Sans" font-weight="bold" font-size="18" fill="#e0ffff" text-anchor="middle">W</text>
<rect x="547.5" y="3.5" width="98" height="20.5" rx="7.5" fill="#000" stroke="#16147c" stroke-width="1.2"/><path d="M554 24.5H639" stroke="#5654a8" stroke-width="1"/>
<g transform="translate(572.50,20.7) scale(0.94,1)"><text x="0" y="0" font-family="Liberation Sans" font-size="18.5" fill="#fff" textLength="51.60" lengthAdjust="spacing">400us</text></g>
<g transform="translate(707.70,20.9) scale(0.88,1)"><text x="0" y="0" font-family="Liberation Sans" font-size="18" fill="#f0f0ff" textLength="44.89" lengthAdjust="spacing">Menu</text></g>
<rect x="16" y="456" width="17" height="2.2" fill="#f0f048"/>
<path d="M16 460.5H33" stroke="#e8e850" stroke-width="1" stroke-dasharray="2.5 1" fill="none"/>
<g transform="translate(14.80,473.5) scale(0.94,1)"><text x="0" y="0" font-family="Liberation Sans" font-size="12.5" fill="#f0f048" textLength="19.15" lengthAdjust="spacing">DC</text></g>
<circle cx="48.5" cy="465" r="8.3" fill="none" stroke="#4c4c5c" stroke-width="1.8"/>
<text x="48.5" y="469.5" font-family="Liberation Sans" font-size="11" fill="#4a4a60" text-anchor="middle">20</text>
<path d="M64 462.5H67L68 457.5H72L73 462.5H75L76 457.5H80L81 462.5H82.5" stroke="#f0f060" stroke-width="1.6" fill="none"/>
<path d="M64 466.5H66L67 471H71L72 466.5H74L75 471H79L80 466.5H82.5" stroke="#9494c0" stroke-width="1.3" fill="none"/>
<rect x="87.5" y="453.5" width="81" height="21" rx="9.5" fill="#000" stroke="#1c1a84" stroke-width="1.2"/>
<g transform="translate(105.00,472) scale(0.94,1)"><text x="0" y="0" font-family="Liberation Sans" font-size="18" fill="#f6f660" textLength="48.40" lengthAdjust="spacing">2.00V</text></g>
<rect x="171" y="451" width="1" height="28" fill="#08084c" />
<rect x="172" y="451" width="1" height="28" fill="#6a80f0" />
<rect x="331" y="451" width="1" height="28" fill="#08084c" />
<rect x="332" y="451" width="1" height="28" fill="#6a80f0" />
<g transform="translate(353.00,471) scale(0.74,1)"><text x="0" y="0" font-family="Liberation Sans" font-size="18" fill="#f6f660" textLength="35.14" lengthAdjust="spacing">CH1</text></g>
<path d="M385.5 472.5H392.5L396.5 456.5H403" stroke="#c8e0ff" stroke-width="1.8" fill="none"/>
<rect x="405.5" y="453.5" width="77" height="21" rx="9.5" fill="#000" stroke="#1c1a84" stroke-width="1.2"/>
<g transform="translate(421.50,471.2) scale(0.94,1)"><text x="0" y="0" font-family="Liberation Sans" font-size="18" fill="#f6f660" textLength="48.40" lengthAdjust="spacing">1.52V</text></g>
<rect x="501" y="451" width="1" height="28" fill="#08084c" />
<rect x="502" y="451" width="1" height="28" fill="#6a80f0" />
<rect x="513.5" y="453.5" width="129" height="21" rx="9.5" fill="#000" stroke="#1c1a84" stroke-width="1.2"/>
<g transform="translate(535.00,470.6) scale(0.94,1)"><text x="0" y="0" font-family="Liberation Sans" font-size="16.5" fill="#f6f660" textLength="90.43" lengthAdjust="spacing">37.0000Hz</text></g>
<g transform="translate(669.50,470.2) scale(0.94,1)"><text x="0" y="0" font-family="Liberation Sans" font-size="16.5" fill="#f0f0ff" textLength="117.55" lengthAdjust="spacing">9-July-12 23:32</text></g>
</svg>
</body></html>
